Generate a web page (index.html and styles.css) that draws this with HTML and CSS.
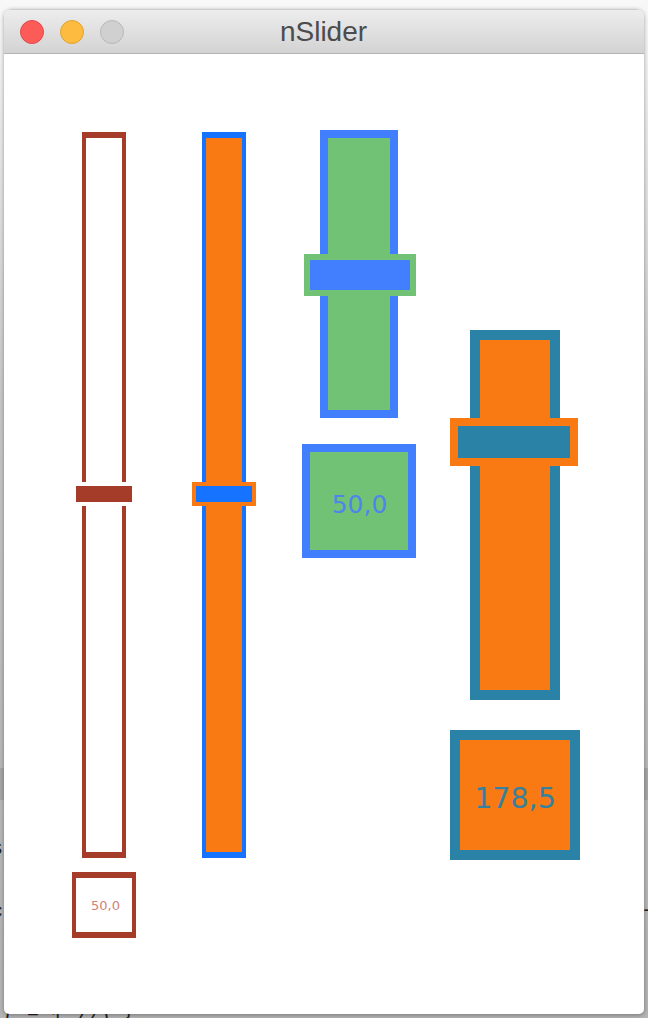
FILE: index.html
```html
<!DOCTYPE html>
<html lang="en">
<head>
    <meta charset="UTF-8">
    <title>nSlider</title>
    <link rel="stylesheet" href="styles.css">
</head>
<body>
    <div class="desk-band"></div>
    <span class="desk-text desk-s">s</span>
    <span class="desk-text desk-c">c</span>
    <span class="desk-text desk-dash">-</span>
    <span class="desk-text desk-code">( = 1 //) {</span>

    <div class="window">
        <div class="titlebar">
            <div class="lights">
                <span class="light light-close"></span>
                <span class="light light-min"></span>
                <span class="light light-max"></span>
            </div>
            <div class="title">nSlider</div>
        </div>
        <div class="content">
            <div class="col col-brown">
                <div class="slider">
                    <div class="track"></div>
                    <div class="thumb"></div>
                </div>
                <div class="value">50,0</div>
            </div>
            <div class="col col-blue">
                <div class="slider">
                    <div class="track"></div>
                    <div class="thumb"></div>
                </div>
            </div>
            <div class="col col-green">
                <div class="slider">
                    <div class="track"></div>
                    <div class="thumb"></div>
                </div>
                <div class="value">50,0</div>
            </div>
            <div class="col col-teal">
                <div class="slider">
                    <div class="track"></div>
                    <div class="thumb"></div>
                </div>
                <div class="value">178,5</div>
            </div>
        </div>
    </div>
</body>
</html>
```

FILE: styles.css
```css
* {
    box-sizing: border-box;
}

html, body {
    height: 1018px;
    margin: 0;
    overflow: hidden;
}

body {
    position: relative;
    padding: 9px 4px 0;
    background: linear-gradient(to bottom, #f8f8f8 0, #f2f2f2 60px, #c8c8c8 400px, #b8b8b8 760px, #b4b4b4 1018px);
}

/* what shows of the desktop behind the window */
.desk-band {
    position: absolute;
    left: 0;
    right: 0;
    top: 768px;
    height: 32px;
    background: #a6a6a6;
}

.desk-text {
    position: absolute;
    color: #222222;
    font-family: "Liberation Mono", monospace;
    font-size: 20px;
    line-height: 20px;
    white-space: pre;
}

.desk-s {
    left: -9px;
    top: 839px;
}

.desk-c {
    left: -9px;
    top: 902px;
}

.desk-dash {
    left: 641px;
    top: 901px;
}

.desk-code {
    left: 3px;
    top: 1009px;
}

.window {
    position: relative;
    height: 1005px;
    background: #ffffff;
    border-radius: 8px 8px 5px 5px;
    box-shadow: 0 1px 4px rgba(0, 0, 0, 0.35);
    overflow: hidden;
}

.titlebar {
    position: relative;
    display: flex;
    align-items: center;
    justify-content: center;
    height: 45px;
    background: linear-gradient(to bottom, #ededed, #d3d3d3);
    border-top: 1px solid #cdcdcd;
    border-bottom: 1px solid #b4b4b4;
}

.lights {
    position: absolute;
    left: 16px;
    top: 10px;
    display: flex;
    gap: 16px;
}

.light {
    width: 24px;
    height: 24px;
    border-radius: 50%;
    border: 1px solid;
}

.light-close {
    background: #fc5b57;
    border-color: #e5484a;
}

.light-min {
    background: #fdbc40;
    border-color: #e0a32e;
}

.light-max {
    background: #d0d0d0;
    border-color: #b8b8b8;
}

.title {
    margin-left: -1px;
    color: #4c4c4c;
    font-family: "Liberation Sans", sans-serif;
    font-size: 28px;
    line-height: 30px;
}

.content {
    display: flex;
    align-items: flex-start;
    padding-left: 68px;
}

.col {
    display: flex;
    flex-direction: column;
    align-items: center;
}

.slider {
    position: relative;
}

.track {
    width: 100%;
    height: 100%;
    border-style: solid;
}

.thumb {
    position: absolute;
    border-style: solid;
}

.value {
    display: flex;
    align-items: center;
    justify-content: center;
    border-style: solid;
    font-family: "DejaVu Sans", sans-serif;
}

/* brown slider */
.col-brown {
    width: 64px;
    margin-top: 78px;
}

.col-brown .slider {
    width: 44px;
    height: 726px;
}

.col-brown .track {
    background: #ffffff;
    border-color: #a53c2a;
    border-width: 6px 4px;
}

.col-brown .thumb {
    left: -10px;
    top: 350px;
    width: 64px;
    height: 24px;
    background: #a53c2a;
    border-color: #ffffff;
    border-width: 4px;
}

.col-brown .value {
    width: 64px;
    height: 66px;
    margin-top: 14px;
    padding-left: 3px;
    background: #ffffff;
    border-color: #a53c2a;
    border-width: 6px 4px;
    color: #cf8478;
    font-size: 13px;
}

/* blue slider, no value box */
.col-blue {
    width: 64px;
    margin-top: 78px;
    margin-left: 56px;
}

.col-blue .slider {
    width: 44px;
    height: 726px;
}

.col-blue .track {
    background: #f97913;
    border-color: #1673ff;
    border-width: 6px 4px;
}

.col-blue .thumb {
    left: -10px;
    top: 350px;
    width: 64px;
    height: 24px;
    background: #1673ff;
    border-color: #f97913;
    border-width: 4px;
}

/* green slider */
.col-green {
    width: 114px;
    margin-top: 76px;
    margin-left: 46px;
}

.col-green .slider {
    width: 78px;
    height: 288px;
}

.col-green .track {
    background: #72c276;
    border-color: #417fff;
    border-width: 8px;
}

.col-green .thumb {
    left: -16px;
    top: 124px;
    width: 112px;
    height: 42px;
    background: #417fff;
    border-color: #72c276;
    border-width: 6px;
}

.col-green .value {
    width: 114px;
    height: 114px;
    margin-top: 26px;
    padding-top: 7px;
    padding-left: 1px;
    background: #72c276;
    border-color: #417fff;
    border-width: 8px;
    color: #4c86e6;
    font-size: 25px;
}

/* teal slider */
.col-teal {
    width: 130px;
    margin-top: 276px;
    margin-left: 34px;
}

.col-teal .slider {
    width: 90px;
    height: 370px;
}

.col-teal .track {
    background: #f97913;
    border-color: #2a82a7;
    border-width: 10px;
}

.col-teal .thumb {
    left: -20px;
    top: 88px;
    width: 128px;
    height: 48px;
    background: #2a82a7;
    border-color: #f97913;
    border-width: 8px;
}

.col-teal .value {
    width: 130px;
    height: 130px;
    margin-top: 30px;
    padding-top: 7px;
    background: #f97913;
    border-color: #2a82a7;
    border-width: 10px;
    color: #38819c;
    font-size: 28.5px;
}
```
